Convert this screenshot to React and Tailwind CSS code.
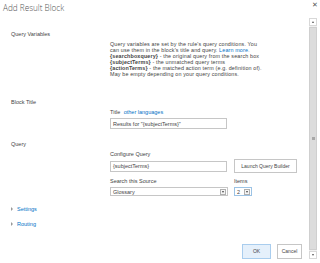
export default function App() {
  const font = { fontFamily: '"Liberation Sans", Arial, sans-serif' };
  const titleFont = { fontFamily: '"Open Sans", "Noto Sans", sans-serif' };
  return (
    <div className="w-[320px] h-[263px] bg-white relative overflow-hidden text-[#444]" style={font}>
      <div className="absolute right-[2px] top-[1px] text-[7px] leading-[7px] text-[#555]">✕</div>
      <div className="pl-[3px] pt-[3px] text-[8.2px] leading-[9px] font-light text-[#555]" style={titleFont}>Add Result Block</div>
      <div className="flex mt-[6px]">
        <div className="flex-1 flex flex-col">
          {/* Query Variables */}
          <div className="flex mt-[13px]">
            <div className="w-[110px] shrink-0 pl-[11px] text-[5.5px] leading-[6px]">Query Variables</div>
            <div className="flex-1 pt-[10px] text-[5.4px] leading-[6px] tracking-[0.14px]">
              <div>Query variables are set by the rule's query conditions. You</div>
              <div>can use them in the block's title and query. <span className="text-[#0072c6]">Learn more.</span></div>
              <div><b>{'{searchboxquery}'}</b> - the original query from the search box</div>
              <div><b>{'{subjectTerms}'}</b> - the unmatched query terms</div>
              <div><b>{'{actionTerms}'}</b> - the matched action term (e.g. definition of).</div>
              <div>May be empty depending on your query conditions.</div>
            </div>
          </div>
          {/* Block Title */}
          <div className="flex mt-[22px]">
            <div className="w-[110px] shrink-0 pl-[11px] text-[5.5px] leading-[6px]">Block Title</div>
            <div className="flex-1 pt-[10px] text-[5.5px] leading-[6px]">
              <div>Title <span className="ml-[2px] text-[#0072c6]">other languages</span></div>
              <div className="mt-[3px] w-[117px] h-[11px] border border-[#c6c6c6] flex items-center px-[2px]">Results for "{'{subjectTerms}'}"</div>
            </div>
          </div>
          {/* Query */}
          <div className="flex mt-[12px]">
            <div className="w-[110px] shrink-0 pl-[11px] text-[5.5px] leading-[6px]">Query</div>
            <div className="flex-1 pt-[10px] text-[5.5px] leading-[6px]">
              <div>Configure Query</div>
              <div className="flex items-center mt-[2px]">
                <div className="w-[117px] h-[11px] border border-[#c6c6c6] flex items-center px-[2px]">{'{subjectTerms}'}</div>
                <div className="ml-[7px] w-[63px] h-[14px] border border-[#c6c6c6] flex items-center justify-center text-[5px]">Launch Query Builder</div>
              </div>
              <div className="flex mt-[5px]">
                <div className="w-[124px]">
                  <div>Search this Source</div>
                  <div className="mt-[3px] w-[118px] h-[9px] border border-[#c6c6c6] flex items-center pl-[2px] pr-[1px]">
                    <span className="flex-1">Glossary</span>
                    <span className="w-[6px] h-[6px] border border-[#b0b0b0] bg-[#f4f4f4] flex items-center justify-center">
                      <span className="w-0 h-0 border-l-[1.5px] border-r-[1.5px] border-t-[2px] border-l-transparent border-r-transparent border-t-[#444]"></span>
                    </span>
                  </div>
                </div>
                <div>
                  <div>Items</div>
                  <div className="mt-[3px] w-[18px] h-[9px] border border-[#9cc3e5] flex items-center pl-[2px] pr-[1px]">
                    <span className="flex-1">2</span>
                    <span className="w-[6px] h-[6px] border border-[#b0b0b0] bg-[#f4f4f4] flex items-center justify-center">
                      <span className="w-0 h-0 border-l-[1.5px] border-r-[1.5px] border-t-[2px] border-l-transparent border-r-transparent border-t-[#444]"></span>
                    </span>
                  </div>
                </div>
              </div>
            </div>
          </div>
          {/* Settings / Routing */}
          <div className="mt-[10px] pl-[11px] flex items-center text-[5.5px] leading-[6px] text-[#0072c6]">
            <span className="w-0 h-0 border-t-[2px] border-b-[2px] border-l-[2.5px] border-t-transparent border-b-transparent border-l-[#999] mr-[4px]"></span>
            Settings
          </div>
          <div className="mt-[9px] pl-[11px] flex items-center text-[5.5px] leading-[6px] text-[#0072c6]">
            <span className="w-0 h-0 border-t-[2px] border-b-[2px] border-l-[2.5px] border-t-transparent border-b-transparent border-l-[#999] mr-[4px]"></span>
            Routing
          </div>
          <div className="flex justify-end mt-[17px] pr-[7px] gap-[6px] text-[5px]">
            <div className="w-[29px] h-[15px] bg-[#e5f0fb] border border-[#a9cdee] flex items-center justify-center">OK</div>
            <div className="w-[25px] h-[15px] bg-white border border-[#c6c6c6] flex items-center justify-center">Cancel</div>
          </div>
        </div>
        {/* scrollbar */}
        <div className="w-[8px] mr-[3px] h-[241px] flex flex-col bg-[#f0f0f0]">
          <div className="h-[8px] bg-white border border-[#d8d8d8] flex items-center justify-center">
            <span className="w-0 h-0 border-l-[1.5px] border-r-[1.5px] border-b-[2px] border-l-transparent border-r-transparent border-b-[#555]"></span>
          </div>
          <div className="flex-1 mt-[1px] bg-[#dcdcdc] border border-[#cfcfcf] flex items-center justify-center">
            <span className="w-[3px] h-[3px] bg-[#a8a8a8]"></span>
          </div>
          <div className="h-[8px] mt-[1px] bg-white border border-[#d8d8d8] flex items-center justify-center">
            <span className="w-0 h-0 border-l-[1.5px] border-r-[1.5px] border-t-[2px] border-l-transparent border-r-transparent border-t-[#555]"></span>
          </div>
        </div>
      </div>
    </div>
  );
}
